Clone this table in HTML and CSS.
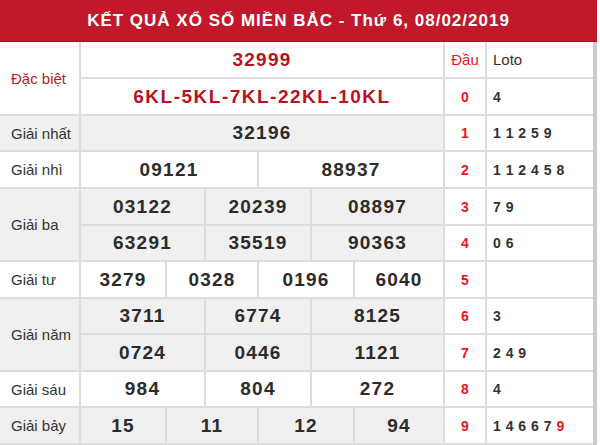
FILE: index.html
```html
<!DOCTYPE html>
<html lang="vi">
<head>
<meta charset="utf-8">
<link rel="stylesheet" href="styles.css">
</head>
<body>
<div class="board">
  <div class="title">KẾT QUẢ XỔ SỐ MIỀN BẮC - Thứ 6, 08/02/2019</div>
  <div class="grid">
    <!-- Đặc biệt -->
    <div class="cell label special r2">Đặc biệt</div>
    <div class="cell num top c6">32999</div>
    <div class="cell head-dau">Đầu</div>
    <div class="cell head-loto">Loto</div>
    <div class="cell num code c6">6KL-5KL-7KL-22KL-10KL</div>
    <div class="cell dau">0</div>
    <div class="cell loto">4</div>

    <!-- Giải nhất -->
    <div class="cell label alt">Giải nhất</div>
    <div class="cell num alt c6">32196</div>
    <div class="cell dau">1</div>
    <div class="cell loto">1 1 2 5 9</div>

    <!-- Giải nhì -->
    <div class="cell label">Giải nhì</div>
    <div class="cell num c3">09121</div>
    <div class="cell num c3">88937</div>
    <div class="cell dau">2</div>
    <div class="cell loto">1 1 2 4 5 8</div>

    <!-- Giải ba -->
    <div class="cell label alt r2">Giải ba</div>
    <div class="cell num alt c2">03122</div>
    <div class="cell num alt c2">20239</div>
    <div class="cell num alt c2">08897</div>
    <div class="cell dau">3</div>
    <div class="cell loto">7 9</div>
    <div class="cell num alt c2">63291</div>
    <div class="cell num alt c2">35519</div>
    <div class="cell num alt c2">90363</div>
    <div class="cell dau">4</div>
    <div class="cell loto">0 6</div>

    <!-- Giải tư -->
    <div class="cell label">Giải tư</div>
    <div class="cell num">3279</div>
    <div class="cell num c2">0328</div>
    <div class="cell num c2">0196</div>
    <div class="cell num">6040</div>
    <div class="cell dau">5</div>
    <div class="cell loto"></div>

    <!-- Giải năm -->
    <div class="cell label alt r2">Giải năm</div>
    <div class="cell num alt c2">3711</div>
    <div class="cell num alt c2">6774</div>
    <div class="cell num alt c2">8125</div>
    <div class="cell dau">6</div>
    <div class="cell loto">3</div>
    <div class="cell num alt c2">0724</div>
    <div class="cell num alt c2">0446</div>
    <div class="cell num alt c2">1121</div>
    <div class="cell dau">7</div>
    <div class="cell loto">2 4 9</div>

    <!-- Giải sáu -->
    <div class="cell label">Giải sáu</div>
    <div class="cell num c2">984</div>
    <div class="cell num c2">804</div>
    <div class="cell num c2">272</div>
    <div class="cell dau">8</div>
    <div class="cell loto">4</div>

    <!-- Giải bảy -->
    <div class="cell label alt">Giải bảy</div>
    <div class="cell num alt">15</div>
    <div class="cell num alt c2">11</div>
    <div class="cell num alt c2">12</div>
    <div class="cell num alt">94</div>
    <div class="cell dau">9</div>
    <div class="cell loto">1 4 6 6 7 <span class="hit">9</span></div>
  </div>
</div>
</body>
</html>
```

FILE: styles.css
```css
html, body {
  margin: 0;
  padding: 0;
  background: #fff;
}

body {
  font-family: "Liberation Sans", Arial, sans-serif;
  color: #333;
}

.board {
  width: 597px;
  height: 445px;
  overflow: hidden;
}

.title {
  height: 41px;
  background: #c1192b;
  border-bottom: 1px solid #a5101f;
  color: #fff;
  font-weight: bold;
  font-size: 17px;
  letter-spacing: 1px;
  display: flex;
  align-items: center;
  justify-content: center;
}

.grid {
  display: grid;
  grid-template-columns: 81px 86px 39px 53px 53px 43px 90px 42px 106px;
  grid-template-rows: 37px 37px 36px 37px 37px 36px 37px 36px 37px 36px 37px;
  border-right: 4px solid #cbcbcb;
}

.cell {
  box-sizing: border-box;
  border-right: 2px solid #dddddd;
  border-bottom: 2px solid #dddddd;
  background: #fff;
  display: flex;
  align-items: center;
  justify-content: center;
  white-space: pre;
}

.alt {
  background: #f0f0f0;
}

.r2 { grid-row: span 2; }
.c2 { grid-column: span 2; }
.c3 { grid-column: span 3; }
.c6 { grid-column: span 6; }

.label {
  justify-content: flex-start;
  padding-left: 11px;
  font-size: 15px;
  color: #333;
}

.label.special {
  color: #c1192b;
}

.num {
  font-size: 19px;
  font-weight: bold;
  letter-spacing: 1.2px;
  color: #2b2b2b;
}

.num.top,
.num.code {
  color: #b8121f;
}

.num.code {
  letter-spacing: 1.5px;
}

.head-dau {
  color: #f0141e;
  font-size: 15px;
}

.head-loto {
  justify-content: flex-start;
  padding-left: 6px;
  font-size: 15px;
  border-right: none;
}

.dau {
  color: #f0141e;
  font-weight: bold;
  font-size: 14px;
}

.loto {
  justify-content: flex-start;
  padding-left: 6px;
  font-size: 14px;
  font-weight: bold;
  letter-spacing: 0.5px;
  color: #333;
  border-right: none;
}

.hit {
  color: #f0141e;
}
```
